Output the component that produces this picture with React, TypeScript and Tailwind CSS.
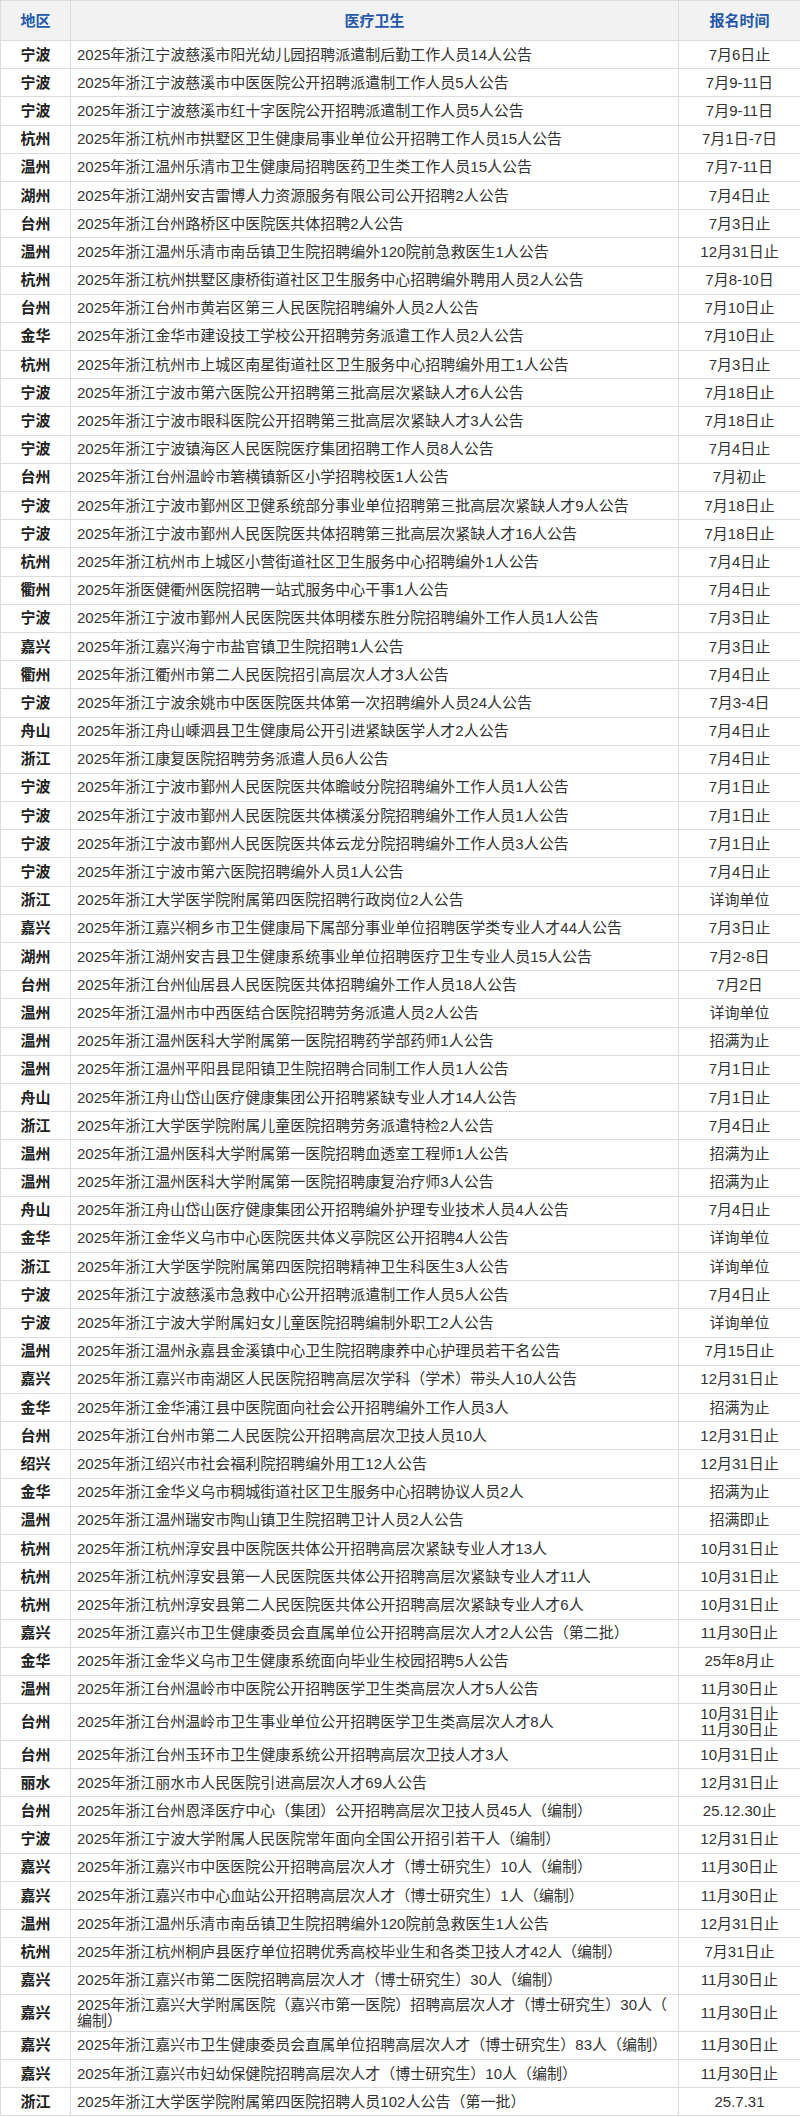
import React from 'react';

type Row = [string, string, string];

// 地区 / 医疗卫生 / 报名时间
const rows: Row[] = [
  ['宁波', '2025年浙江宁波慈溪市阳光幼儿园招聘派遣制后勤工作人员14人公告', '7月6日止'],
  ['宁波', '2025年浙江宁波慈溪市中医医院公开招聘派遣制工作人员5人公告', '7月9-11日'],
  ['宁波', '2025年浙江宁波慈溪市红十字医院公开招聘派遣制工作人员5人公告', '7月9-11日'],
  ['杭州', '2025年浙江杭州市拱墅区卫生健康局事业单位公开招聘工作人员15人公告', '7月1日-7日'],
  ['温州', '2025年浙江温州乐清市卫生健康局招聘医药卫生类工作人员15人公告', '7月7-11日'],
  ['湖州', '2025年浙江湖州安吉雷博人力资源服务有限公司公开招聘2人公告', '7月4日止'],
  ['台州', '2025年浙江台州路桥区中医院医共体招聘2人公告', '7月3日止'],
  ['温州', '2025年浙江温州乐清市南岳镇卫生院招聘编外120院前急救医生1人公告', '12月31日止'],
  ['杭州', '2025年浙江杭州拱墅区康桥街道社区卫生服务中心招聘编外聘用人员2人公告', '7月8-10日'],
  ['台州', '2025年浙江台州市黄岩区第三人民医院招聘编外人员2人公告', '7月10日止'],
  ['金华', '2025年浙江金华市建设技工学校公开招聘劳务派遣工作人员2人公告', '7月10日止'],
  ['杭州', '2025年浙江杭州市上城区南星街道社区卫生服务中心招聘编外用工1人公告', '7月3日止'],
  ['宁波', '2025年浙江宁波市第六医院公开招聘第三批高层次紧缺人才6人公告', '7月18日止'],
  ['宁波', '2025年浙江宁波市眼科医院公开招聘第三批高层次紧缺人才3人公告', '7月18日止'],
  ['宁波', '2025年浙江宁波镇海区人民医院医疗集团招聘工作人员8人公告', '7月4日止'],
  ['台州', '2025年浙江台州温岭市箬横镇新区小学招聘校医1人公告', '7月初止'],
  ['宁波', '2025年浙江宁波市鄞州区卫健系统部分事业单位招聘第三批高层次紧缺人才9人公告', '7月18日止'],
  ['宁波', '2025年浙江宁波市鄞州人民医院医共体招聘第三批高层次紧缺人才16人公告', '7月18日止'],
  ['杭州', '2025年浙江杭州市上城区小营街道社区卫生服务中心招聘编外1人公告', '7月4日止'],
  ['衢州', '2025年浙医健衢州医院招聘一站式服务中心干事1人公告', '7月4日止'],
  ['宁波', '2025年浙江宁波市鄞州人民医院医共体明楼东胜分院招聘编外工作人员1人公告', '7月3日止'],
  ['嘉兴', '2025年浙江嘉兴海宁市盐官镇卫生院招聘1人公告', '7月3日止'],
  ['衢州', '2025年浙江衢州市第二人民医院招引高层次人才3人公告', '7月4日止'],
  ['宁波', '2025年浙江宁波余姚市中医医院医共体第一次招聘编外人员24人公告', '7月3-4日'],
  ['舟山', '2025年浙江舟山嵊泗县卫生健康局公开引进紧缺医学人才2人公告', '7月4日止'],
  ['浙江', '2025年浙江康复医院招聘劳务派遣人员6人公告', '7月4日止'],
  ['宁波', '2025年浙江宁波市鄞州人民医院医共体瞻岐分院招聘编外工作人员1人公告', '7月1日止'],
  ['宁波', '2025年浙江宁波市鄞州人民医院医共体横溪分院招聘编外工作人员1人公告', '7月1日止'],
  ['宁波', '2025年浙江宁波市鄞州人民医院医共体云龙分院招聘编外工作人员3人公告', '7月1日止'],
  ['宁波', '2025年浙江宁波市第六医院招聘编外人员1人公告', '7月4日止'],
  ['浙江', '2025年浙江大学医学院附属第四医院招聘行政岗位2人公告', '详询单位'],
  ['嘉兴', '2025年浙江嘉兴桐乡市卫生健康局下属部分事业单位招聘医学类专业人才44人公告', '7月3日止'],
  ['湖州', '2025年浙江湖州安吉县卫生健康系统事业单位招聘医疗卫生专业人员15人公告', '7月2-8日'],
  ['台州', '2025年浙江台州仙居县人民医院医共体招聘编外工作人员18人公告', '7月2日'],
  ['温州', '2025年浙江温州市中西医结合医院招聘劳务派遣人员2人公告', '详询单位'],
  ['温州', '2025年浙江温州医科大学附属第一医院招聘药学部药师1人公告', '招满为止'],
  ['温州', '2025年浙江温州平阳县昆阳镇卫生院招聘合同制工作人员1人公告', '7月1日止'],
  ['舟山', '2025年浙江舟山岱山医疗健康集团公开招聘紧缺专业人才14人公告', '7月1日止'],
  ['浙江', '2025年浙江大学医学院附属儿童医院招聘劳务派遣特检2人公告', '7月4日止'],
  ['温州', '2025年浙江温州医科大学附属第一医院招聘血透室工程师1人公告', '招满为止'],
  ['温州', '2025年浙江温州医科大学附属第一医院招聘康复治疗师3人公告', '招满为止'],
  ['舟山', '2025年浙江舟山岱山医疗健康集团公开招聘编外护理专业技术人员4人公告', '7月4日止'],
  ['金华', '2025年浙江金华义乌市中心医院医共体义亭院区公开招聘4人公告', '详询单位'],
  ['浙江', '2025年浙江大学医学院附属第四医院招聘精神卫生科医生3人公告', '详询单位'],
  ['宁波', '2025年浙江宁波慈溪市急救中心公开招聘派遣制工作人员5人公告', '7月4日止'],
  ['宁波', '2025年浙江宁波大学附属妇女儿童医院招聘编制外职工2人公告', '详询单位'],
  ['温州', '2025年浙江温州永嘉县金溪镇中心卫生院招聘康养中心护理员若干名公告', '7月15日止'],
  ['嘉兴', '2025年浙江嘉兴市南湖区人民医院招聘高层次学科（学术）带头人10人公告', '12月31日止'],
  ['金华', '2025年浙江金华浦江县中医院面向社会公开招聘编外工作人员3人', '招满为止'],
  ['台州', '2025年浙江台州市第二人民医院公开招聘高层次卫技人员10人', '12月31日止'],
  ['绍兴', '2025年浙江绍兴市社会福利院招聘编外用工12人公告', '12月31日止'],
  ['金华', '2025年浙江金华义乌市稠城街道社区卫生服务中心招聘协议人员2人', '招满为止'],
  ['温州', '2025年浙江温州瑞安市陶山镇卫生院招聘卫计人员2人公告', '招满即止'],
  ['杭州', '2025年浙江杭州淳安县中医院医共体公开招聘高层次紧缺专业人才13人', '10月31日止'],
  ['杭州', '2025年浙江杭州淳安县第一人民医院医共体公开招聘高层次紧缺专业人才11人', '10月31日止'],
  ['杭州', '2025年浙江杭州淳安县第二人民医院医共体公开招聘高层次紧缺专业人才6人', '10月31日止'],
  ['嘉兴', '2025年浙江嘉兴市卫生健康委员会直属单位公开招聘高层次人才2人公告（第二批）', '11月30日止'],
  ['金华', '2025年浙江金华义乌市卫生健康系统面向毕业生校园招聘5人公告', '25年8月止'],
  ['温州', '2025年浙江台州温岭市中医院公开招聘医学卫生类高层次人才5人公告', '11月30日止'],
  ['台州', '2025年浙江台州温岭市卫生事业单位公开招聘医学卫生类高层次人才8人', '10月31日止\n11月30日止'],
  ['台州', '2025年浙江台州玉环市卫生健康系统公开招聘高层次卫技人才3人', '10月31日止'],
  ['丽水', '2025年浙江丽水市人民医院引进高层次人才69人公告', '12月31日止'],
  ['台州', '2025年浙江台州恩泽医疗中心（集团）公开招聘高层次卫技人员45人（编制）', '25.12.30止'],
  ['宁波', '2025年浙江宁波大学附属人民医院常年面向全国公开招引若干人（编制）', '12月31日止'],
  ['嘉兴', '2025年浙江嘉兴市中医医院公开招聘高层次人才（博士研究生）10人（编制）', '11月30日止'],
  ['嘉兴', '2025年浙江嘉兴市中心血站公开招聘高层次人才（博士研究生）1人（编制）', '11月30日止'],
  ['温州', '2025年浙江温州乐清市南岳镇卫生院招聘编外120院前急救医生1人公告', '12月31日止'],
  ['杭州', '2025年浙江杭州桐庐县医疗单位招聘优秀高校毕业生和各类卫技人才42人（编制）', '7月31日止'],
  ['嘉兴', '2025年浙江嘉兴市第二医院招聘高层次人才（博士研究生）30人（编制）', '11月30日止'],
  ['嘉兴', '2025年浙江嘉兴大学附属医院（嘉兴市第一医院）招聘高层次人才（博士研究生）30人（\n编制）', '11月30日止'],
  ['嘉兴', '2025年浙江嘉兴市卫生健康委员会直属单位招聘高层次人才（博士研究生）83人（编制）', '11月30日止'],
  ['嘉兴', '2025年浙江嘉兴市妇幼保健院招聘高层次人才（博士研究生）10人（编制）', '11月30日止'],
  ['浙江', '2025年浙江大学医学院附属第四医院招聘人员102人公告（第一批）', '25.7.31'],
];

const font = 'font-["Liberation_Sans","Noto_Sans_CJK_SC",sans-serif]';

const App: React.FC = () => {
  return (
    <div className={`w-[800px] bg-white ${font}`}>
      <table className="w-full table-fixed border-collapse text-[15px] leading-[16px]">
        <colgroup>
          <col className="w-[70px]" />
          <col className="w-[608px]" />
          <col className="w-[122px]" />
        </colgroup>
        <thead>
          <tr className="h-[40px] bg-[#f2f2f2]">
            <th className="border border-[#dcdcdc] font-bold text-[#2458a8] text-center">地区</th>
            <th className="border border-[#dcdcdc] font-bold text-[#2458a8] text-center">医疗卫生</th>
            <th className="border border-[#dcdcdc] font-bold text-[#2458a8] text-center">报名时间</th>
          </tr>
        </thead>
        <tbody>
          {rows.map(([region, title, date], i) => (
            <tr key={i} className="h-[28.2px]">
              <td className="border border-[#dcdcdc] py-[2px] text-center font-bold text-[#222]">{region}</td>
              <td className="border border-[#dcdcdc] py-[2px] pl-[6px] pr-1 text-left text-[#333] whitespace-pre-line">
                {title}
              </td>
              <td className="border border-[#dcdcdc] py-[2px] text-center text-[#333] whitespace-pre-line">
                {date}
              </td>
            </tr>
          ))}
        </tbody>
      </table>
    </div>
  );
};

export default App;
